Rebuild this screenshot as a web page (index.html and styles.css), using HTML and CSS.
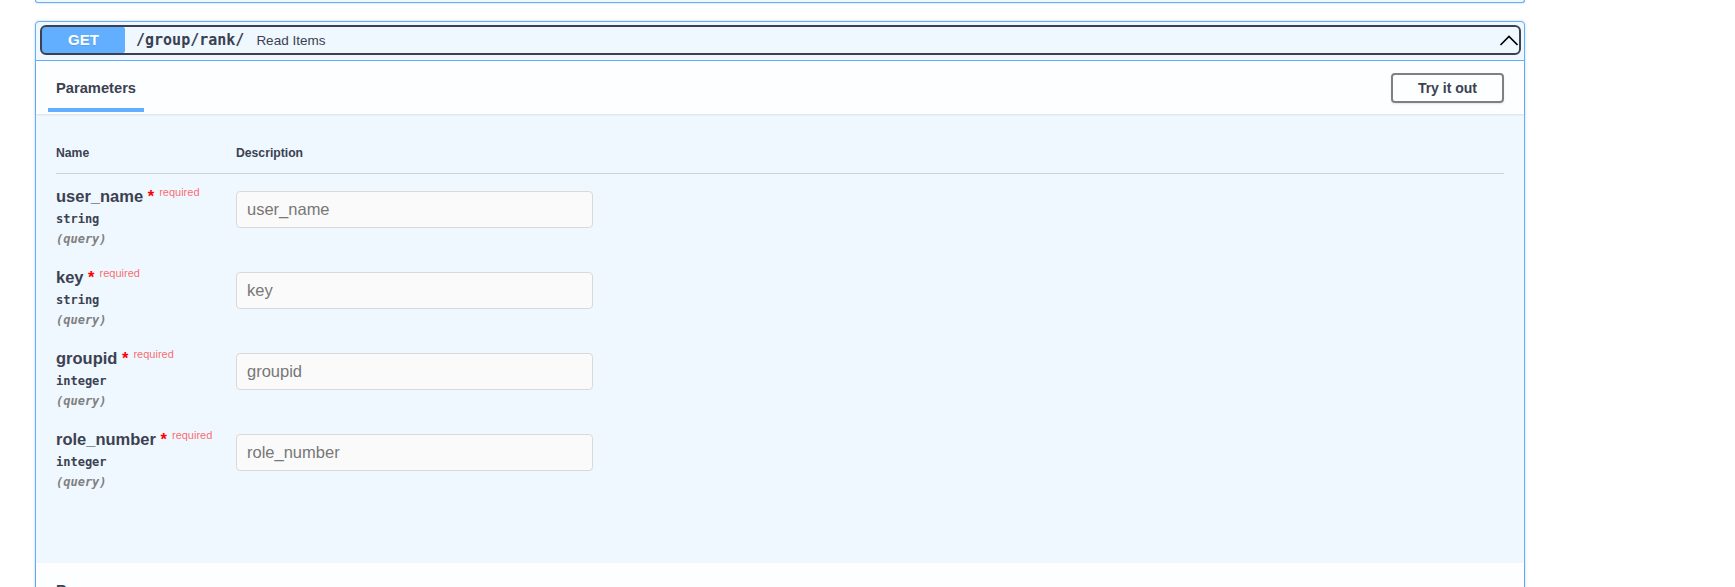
FILE: index.html
```html
<!DOCTYPE html>
<html lang="en">
<head>
    <meta charset="UTF-8">
    <meta name="viewport" content="width=device-width, initial-scale=1.0">
    <title>Read Items</title>
    <link rel="stylesheet" href="styles.css">
</head>
<body>

    <div class="page">
        <div class="opblock opblock-prev"></div>

        <div class="opblock">
            <div class="summary">
                <button class="summary-control">
                    <span class="method">GET</span>
                    <span class="path">/group/rank/</span>
                    <span class="summary-desc">Read Items</span>
                    <svg class="arrow" width="20" height="20" viewBox="0 0 20 20">
                        <polyline points="2.5,15 11,6.5 19.5,15" fill="none" stroke="#000" stroke-width="1.6"/>
                    </svg>
                </button>
            </div>

            <div class="section-header">
                <h4 class="tab-item"><span>Parameters</span></h4>
                <button class="try-out">Try it out</button>
            </div>

            <div class="params">
                <div class="params-head">
                    <div class="col-name">Name</div>
                    <div class="col-desc">Description</div>
                </div>

                <div class="param-row">
                    <div class="col-name">
                        <div class="param-name">user_name<span class="star">&nbsp;*</span></div>
                        <div class="param-type">string</div>
                        <div class="param-in">(query)</div>
                    </div>
                    <div class="col-desc">
                        <input class="param-input" type="text" placeholder="user_name" disabled>
                    </div>
                </div>

                <div class="param-row">
                    <div class="col-name">
                        <div class="param-name">key<span class="star">&nbsp;*</span></div>
                        <div class="param-type">string</div>
                        <div class="param-in">(query)</div>
                    </div>
                    <div class="col-desc">
                        <input class="param-input" type="text" placeholder="key" disabled>
                    </div>
                </div>

                <div class="param-row">
                    <div class="col-name">
                        <div class="param-name">groupid<span class="star">&nbsp;*</span></div>
                        <div class="param-type">integer</div>
                        <div class="param-in">(query)</div>
                    </div>
                    <div class="col-desc">
                        <input class="param-input" type="text" placeholder="groupid" disabled>
                    </div>
                </div>

                <div class="param-row">
                    <div class="col-name">
                        <div class="param-name">role_number<span class="star">&nbsp;*</span></div>
                        <div class="param-type">integer</div>
                        <div class="param-in">(query)</div>
                    </div>
                    <div class="col-desc">
                        <input class="param-input" type="text" placeholder="role_number" disabled>
                    </div>
                </div>
            </div>

            <div class="execute-wrapper"></div>

            <div class="section-header">
                <h4>Responses</h4>
            </div>
            <div class="responses"></div>
        </div>
    </div>

</body>
</html>
```

FILE: styles.css
```css
html,
body {
    overflow: hidden;
}

body {
    margin: 0;
    font-family: "Liberation Sans", Arial, sans-serif;
    color: #3b4151;
    background-color: #fff;
}

.page {
    width: 1490px;
    margin-left: 35px;
}

.opblock {
    border: 1px solid #61affe;
    border-radius: 4px;
    background-color: #eff7ff;
    box-shadow: 0 0 3px rgba(0, 0, 0, 0.19);
}

.opblock-prev {
    box-sizing: border-box;
    height: 3px;
    border-top: none;
    border-radius: 0 0 4px 4px;
    margin-bottom: 18px;
}

.summary {
    padding: 5px 5px 7px 6px;
    border-bottom: 1px solid #61affe;
}

.summary-control {
    display: flex;
    align-items: center;
    width: 100%;
    padding: 0;
    border: none;
    border-radius: 4px;
    outline: 2px solid #3b4151;
    background: transparent;
    font-family: inherit;
    color: inherit;
    text-align: left;
    cursor: pointer;
}

.method {
    width: 83px;
    padding: 5px 0;
    background-color: #61affe;
    border-radius: 2px;
    color: #fff;
    font-size: 15px;
    font-weight: 700;
    line-height: 16px;
    text-align: center;
    text-shadow: 0 1px 0 rgba(0, 0, 0, 0.1);
}

.path {
    padding: 0 12px 0 11px;
    font-family: "DejaVu Sans Mono", monospace;
    font-size: 15px;
    font-weight: 700;
    color: #3b4151;
}

.summary-desc {
    font-size: 13.5px;
    color: #3b4151;
}

.arrow {
    flex-shrink: 0;
    margin-left: auto;
    margin-right: 1px;
}

.section-header {
    box-sizing: border-box;
    display: flex;
    align-items: center;
    height: 53px;
    padding: 0 20px;
    background-color: rgba(255, 255, 255, 0.8);
    box-shadow: 0 1px 2px rgba(0, 0, 0, 0.1);
}

.section-header h4 {
    margin: 0;
    font-size: 14.7px;
    font-weight: 700;
    line-height: 16px;
}

.tab-item span {
    position: relative;
}

.tab-item span::after {
    content: "";
    position: absolute;
    left: 50%;
    bottom: -16px;
    width: 120%;
    height: 4px;
    background-color: #61affe;
    transform: translateX(-50%);
}

.try-out {
    margin-left: auto;
    padding: 5px 25px;
    border: 2px solid #808080;
    border-radius: 4px;
    background: transparent;
    box-shadow: 0 1px 2px rgba(0, 0, 0, 0.1);
    font-family: inherit;
    font-size: 14px;
    font-weight: 700;
    line-height: 16px;
    color: #3b4151;
    cursor: pointer;
}

.params {
    padding: 20px;
}

.params-head {
    display: flex;
    padding: 12px 0;
    border-bottom: 1px solid rgba(59, 65, 81, 0.2);
    font-size: 12.2px;
    font-weight: 700;
    line-height: 15px;
}

.col-name {
    flex-shrink: 0;
    width: 180px;
}

.param-row {
    display: flex;
    padding-top: 10px;
}

.param-row .col-name {
    padding-bottom: 6px;
}

.param-name {
    font-size: 16.5px;
    font-weight: 700;
    line-height: 24px;
}

.param-name .star {
    color: red;
}

.param-name::after {
    content: "required";
    padding: 5px;
    font-size: 11px;
    font-weight: 400;
    line-height: 1;
    vertical-align: 6px;
    color: rgba(255, 0, 0, 0.6);
}

.param-type,
.param-in {
    font-family: "DejaVu Sans Mono", monospace;
    font-size: 12px;
    font-weight: 700;
    line-height: 20px;
}

.param-type {
    margin-top: 1px;
}

.param-in {
    font-style: italic;
    color: #808080;
}

.param-input {
    box-sizing: border-box;
    width: 357px;
    margin-top: 7px;
    padding: 8px 10px;
    border: 1px solid #d9d9d9;
    border-radius: 4px;
    background-color: #fafafa;
    font-family: inherit;
    font-size: 16.5px;
    line-height: 19px;
    color: #888;
}

.param-input::placeholder {
    color: #777;
}

.execute-wrapper {
    height: 45px;
}

.responses {
    height: 60px;
}
```
